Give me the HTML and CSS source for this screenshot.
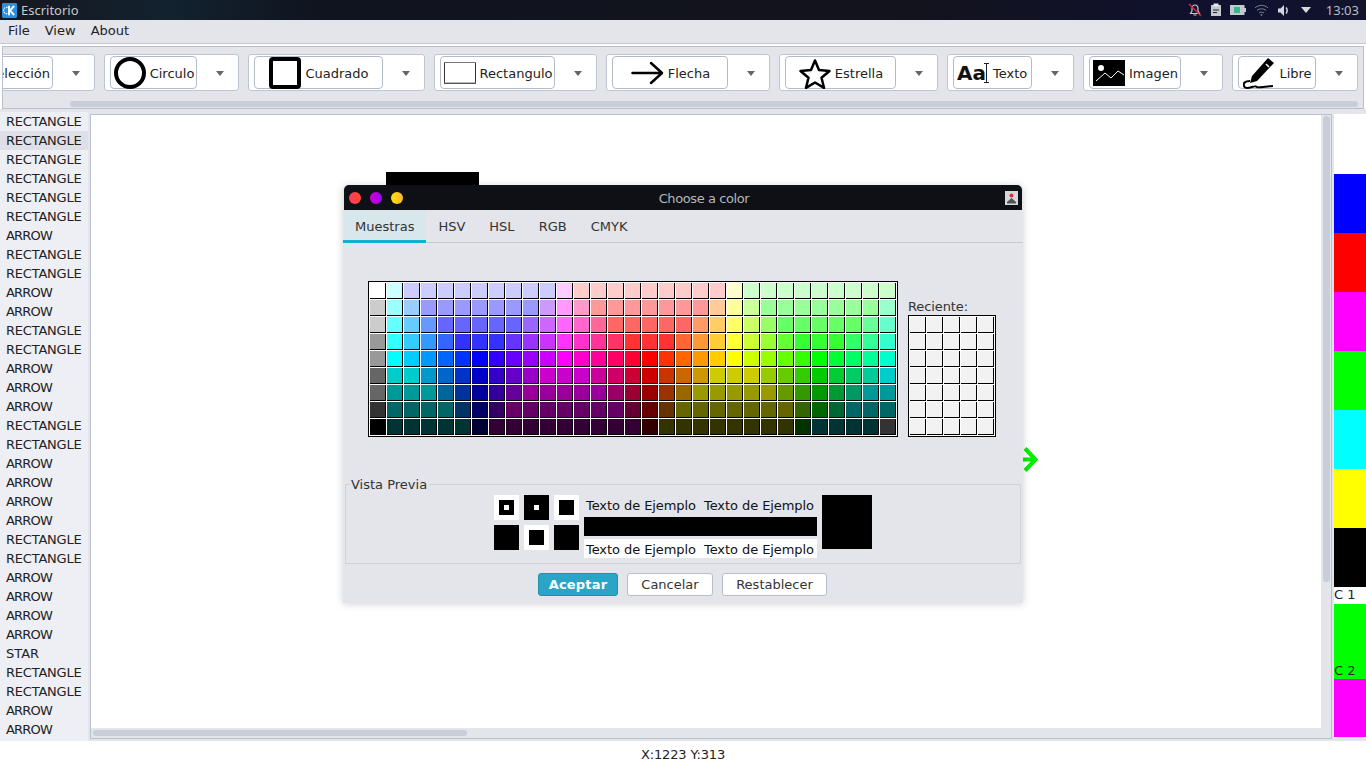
FILE: index.html
```html
<!DOCTYPE html>
<html lang="es">

<head>
    <meta charset="utf-8" />
    <title>Escritorio</title>
    <link rel="stylesheet" href="styles.css">
</head>

<body>
    <!-- desktop panel -->
    <header class="panel">
        <svg class="panel-logo" width="15" height="15" viewBox="0 0 16 16">
            <rect width="16" height="16" rx="1.5" fill="#2b8fe0" />
            <g stroke="#fff" stroke-width="2" fill="none">
                <path d="M7.5 3v10M13 3L8.5 8l4.5 5" />
            </g>
            <circle cx="5" cy="8" r="3.4" fill="none" stroke="#fff" stroke-width="1.2" stroke-dasharray="1.5 1" />
        </svg>
        <span class="panel-title">Escritorio</span>
        <div class="tray">
            <svg width="14" height="14" viewBox="0 0 14 14">
                <path d="M7 2c-2 0-3 1.500-3 4v2l-1.500 2.500h9L10 8V6c0-2.500-1-4-3-4zM5.500 12h3" fill="none" stroke="#c4c8cf" stroke-width="1.200" />
                <path d="M1 1l12 12" stroke="#e0203c" stroke-width="1.400" />
            </svg>
            <svg width="12" height="14" viewBox="0 0 12 14">
                <rect x="1" y="2" width="10" height="11" fill="#c4c8cf" />
                <rect x="3.500" y="0.500" width="5" height="3" fill="#e4e6ea" />
                <path d="M3 7h6M3 9.500h4" stroke="#23252e" />
            </svg>
            <svg width="16" height="12" viewBox="0 0 16 12">
                <rect x="0.500" y="1.500" width="13.500" height="9" fill="#c4c8cf" stroke="#c4c8cf" />
                <rect x="4" y="3" width="6" height="6" fill="#35b98c" />
                <rect x="14" y="4" width="2" height="4" fill="#c4c8cf" />
            </svg>
            <svg width="15" height="12" viewBox="0 0 15 12" fill="none" stroke="#7f8490" stroke-width="1">
                <path d="M1 4c3.500-3.500 9.500-3.500 13 0M3 6.500c2.500-2.300 6.500-2.300 9 0M5 9c1.300-1.100 3.700-1.100 5 0" />
                <circle cx="7.500" cy="11" r="0.600" fill="#7f8490" />
            </svg>
            <svg width="13" height="13" viewBox="0 0 13 13">
                <path d="M1 4.500h2.500L7 1v11L3.500 8.500H1z" fill="#d3d6db" />
                <path d="M9 3.500c1.500 1.500 1.500 4.500 0 6" fill="none" stroke="#d3d6db" stroke-width="1.500" />
            </svg>
            <svg class="tray-arrow" width="10" height="6" viewBox="0 0 10 6">
                <path d="M0 0h10L5 6z" fill="#d8dade" />
            </svg>
            <span class="clock">13:03</span>
        </div>
    </header>

    <nav class="menubar">
        <span>File</span>
        <span>View</span>
        <span>About</span>
    </nav>

    <section class="toolbar">
        <div class="tool-row">
            <div class="tool tool-seleccion">
                <button class="tool-btn">Selección</button>
                <span class="tool-arrow"></span>
            </div>
            <div class="tool">
                <button class="tool-btn btn-circulo">
                    <svg width="32" height="32" viewBox="0 0 32 32">
                        <circle cx="16" cy="16" r="14" fill="none" stroke="#000" stroke-width="4" />
                    </svg>
                    Circulo
                </button>
                <span class="tool-arrow"></span>
            </div>
            <div class="tool">
                <button class="tool-btn btn-cuadrado">
                    <svg width="32" height="32" viewBox="0 0 32 32">
                        <rect x="2" y="2" width="28" height="28" rx="2" fill="#fff" stroke="#000" stroke-width="4" />
                    </svg>
                    Cuadrado
                </button>
                <span class="tool-arrow"></span>
            </div>
            <div class="tool">
                <button class="tool-btn btn-rectangulo">
                    <svg width="32" height="22" viewBox="0 0 32 22">
                        <rect x="0.500" y="0.500" width="31" height="21" fill="#fff" stroke="#333" />
                        <path d="M0 21h32M0 0.500h32" stroke="#777" />
                    </svg>
                    Rectangulo
                </button>
                <span class="tool-arrow"></span>
            </div>
            <div class="tool">
                <button class="tool-btn btn-flecha">
                    <svg width="33" height="24" viewBox="0 0 33 24" fill="none" stroke="#000" stroke-width="2.500" stroke-linecap="round" stroke-linejoin="round">
                        <path d="M1.500 12h29M20 2l11 10-11 10" />
                    </svg>
                    Flecha
                </button>
                <span class="tool-arrow"></span>
            </div>
            <div class="tool">
                <button class="tool-btn btn-estrella">
                    <svg width="32" height="31" viewBox="0 0 32 31">
                        <path d="M16 2.500l4 9.500 10.500 1-8 6.800 2.500 10L16 24.500 7 29.800l2.500-10-8-6.800 10.500-1z" fill="none" stroke="#000" stroke-width="2.500" stroke-linejoin="round" />
                    </svg>
                    Estrella
                </button>
                <span class="tool-arrow"></span>
            </div>
            <div class="tool">
                <button class="tool-btn btn-texto">
                    <span class="icon-aa">Aa</span>
                    <svg class="icon-cursor" width="5" height="20" viewBox="0 0 5 20">
                        <path d="M0 0.500h5M2.500 0.500v19M0 19.500h5" fill="none" stroke="#222" />
                    </svg>
                    Texto
                </button>
                <span class="tool-arrow"></span>
            </div>
            <div class="tool">
                <button class="tool-btn btn-imagen">
                    <svg width="32" height="26" viewBox="0 0 32 26">
                        <rect width="32" height="26" fill="#000" />
                        <circle cx="8" cy="8" r="3" fill="#fff" />
                        <path d="M3 21l9-8 6 5 7-7 6 4" fill="none" stroke="#fff" />
                    </svg>
                    Imagen
                </button>
                <span class="tool-arrow"></span>
            </div>
            <div class="tool">
                <button class="tool-btn btn-libre">
                    <svg width="32" height="33" viewBox="0 0 32 33">
                        <path d="M25 1l6 5-17 18-7 2 2-7z" fill="#000" />
                        <path d="M23 7l3 3" stroke="#fff" stroke-width="1.500" />
                        <path d="M7 24c-5 0-7 2-6 5 1 3 5 2 8 1s4-1 5 0 4 0 16-1" fill="none" stroke="#000" stroke-width="2" />
                    </svg>
                    Libre
                </button>
                <span class="tool-arrow"></span>
            </div>
        </div>
        <div class="tool-scroll"></div>
    </section>

    <main class="workspace">
        <ul class="shape-list">
            <li>RECTANGLE</li>
            <li class="selected">RECTANGLE</li>
            <li>RECTANGLE</li>
            <li>RECTANGLE</li>
            <li>RECTANGLE</li>
            <li>RECTANGLE</li>
            <li class="arrow">ARROW</li>
            <li>RECTANGLE</li>
            <li>RECTANGLE</li>
            <li class="arrow">ARROW</li>
            <li class="arrow">ARROW</li>
            <li>RECTANGLE</li>
            <li>RECTANGLE</li>
            <li class="arrow">ARROW</li>
            <li class="arrow">ARROW</li>
            <li class="arrow">ARROW</li>
            <li>RECTANGLE</li>
            <li>RECTANGLE</li>
            <li class="arrow">ARROW</li>
            <li class="arrow">ARROW</li>
            <li class="arrow">ARROW</li>
            <li class="arrow">ARROW</li>
            <li>RECTANGLE</li>
            <li>RECTANGLE</li>
            <li class="arrow">ARROW</li>
            <li class="arrow">ARROW</li>
            <li class="arrow">ARROW</li>
            <li class="arrow">ARROW</li>
            <li class="star">STAR</li>
            <li>RECTANGLE</li>
            <li>RECTANGLE</li>
            <li class="arrow">ARROW</li>
            <li class="arrow">ARROW</li>
        </ul>

        <div class="canvas-pane">
            <div class="canvas">
                <div class="shape-rect"></div>
                <svg class="shape-arrow" width="20" height="25" viewBox="0 0 20 25" fill="none" stroke="#00ee00" stroke-width="4">
                    <path d="M0 12.500H15M5 1.500L15.500 12.500 5 23.500" />
                </svg>
            </div>
            <div class="vscroll"><div class="vthumb"></div></div>
            <div class="hscroll"><div class="hthumb"></div></div>
            <div class="corner"></div>
        </div>

        <aside class="colors">
            <div class="color c-white"></div>
            <div class="color c-blue"></div>
            <div class="color c-red"></div>
            <div class="color c-magenta"></div>
            <div class="color c-green"></div>
            <div class="color c-cyan"></div>
            <div class="color c-yellow"></div>
            <div class="color c-black"></div>
            <div class="slot-label">C 1</div>
            <div class="slot-green">C 2</div>
            <div class="slot-magenta"></div>
        </aside>
    </main>

    <footer class="status">X:1223 Y:313</footer>

    <!-- color chooser -->
    <div class="dialog">
        <div class="dialog-title">
            <span class="dot dot-red"></span>
            <span class="dot dot-purple"></span>
            <span class="dot dot-yellow"></span>
            <span class="dialog-name">Choose a color</span>
            <svg class="dialog-icon" width="13" height="14" viewBox="0 0 13 14">
                <rect width="13" height="14" fill="#d5d7dc" />
                <path d="M2 11l4.500-4 4.500 4v1.500H2z" fill="#555" />
                <circle cx="6.500" cy="4.500" r="2" fill="#d83030" />
            </svg>
        </div>
        <div class="tabs">
            <span class="tab active">Muestras</span>
            <span class="tab">HSV</span>
            <span class="tab">HSL</span>
            <span class="tab">RGB</span>
            <span class="tab">CMYK</span>
        </div>
        <div class="swatch-area">
            <div class="swatches main-swatches" id="mainSwatches"></div>
            <div class="recent">
                <div class="recent-label">Reciente:</div>
                <div class="swatches recent-swatches" id="recentSwatches"></div>
            </div>
        </div>
        <fieldset class="preview">
            <legend>Vista Previa</legend>
            <div class="preview-row">
                <div class="tiles">
                    <div class="tile white"><div class="inner black"><div class="core white"></div></div></div>
                    <div class="tile black"><div class="core white"></div></div>
                    <div class="tile white"><div class="inner black"></div></div>
                    <div class="tile black"></div>
                    <div class="tile white"><div class="inner black"></div></div>
                    <div class="tile black"></div>
                </div>
                <div class="samples">
                    <div class="sample"><span>Texto de Ejemplo</span><span>Texto de Ejemplo</span></div>
                    <div class="sample-bar"></div>
                    <div class="sample sample-white"><span>Texto de Ejemplo</span><span>Texto de Ejemplo</span></div>
                </div>
                <div class="preview-color"></div>
            </div>
        </fieldset>
        <div class="dialog-buttons">
            <button class="btn btn-ok">Aceptar</button>
            <button class="btn btn-cancel">Cancelar</button>
            <button class="btn btn-reset">Restablecer</button>
        </div>
    </div>

    <script src="swatches.js"></script>
</body>

</html>
```

FILE: styles.css
```css
:root {
    --bg: #e3e5eb;
    --line: #b9c0cc;
    --thumb: #c8cdd7;
    --text: #222;
}

* {
    box-sizing: border-box;
}

html,
body {
    margin: 0;
    height: 768px;
    overflow: hidden;
}

body {
    position: relative;
    display: flex;
    flex-direction: column;
    background: #fff;
    color: var(--text);
    font-family: "DejaVu Sans", sans-serif;
    font-size: 13px;
}

/* desktop panel */
.panel {
    display: flex;
    align-items: center;
    height: 20px;
    padding: 0 7px 0 2px;
    background: linear-gradient(90deg, #16171f 0, #12222f 170px, #10141f 320px, #13131d 900px, #0f1130 1250px, #12142c 100%);
    font-family: "Noto Sans", sans-serif;
    color: #c6cad0;
}

.panel-logo {
    margin-right: 4px;
}

.tray {
    display: flex;
    align-items: center;
    gap: 8px;
    margin-left: auto;
}

.tray-arrow {
    margin: 0 7px 0 3px;
}

.clock {
    color: #b9bdc5;
}

/* menu */
.menubar {
    display: flex;
    gap: 15px;
    height: 24px;
    padding: 3px 8px 0;
    background: var(--bg);
    border-bottom: 1px solid #c3c8d2;
}

/* toolbar */
.toolbar {
    margin: 2px 2px 0;
    height: 63px;
    border: 1px solid var(--line);
    background: var(--bg);
}

.tool-row {
    display: flex;
    gap: 9px;
    padding-top: 7px;
    overflow: hidden;
}

.tool {
    display: flex;
    flex: none;
    align-items: center;
    height: 37px;
    padding-left: 5px;
    background: #fff;
    border: 1px solid #bfc5d0;
    border-radius: 3px;
}

.tool-seleccion {
    margin-left: -46px;
}

.tool-btn {
    display: flex;
    align-items: center;
    justify-content: center;
    gap: 4px;
    height: 33px;
    padding: 1px 0 0 1px;
    background: #fff;
    border: 1px solid #b4bbc8;
    border-radius: 4px;
    color: var(--text);
    font: inherit;
    white-space: nowrap;
}

.tool-seleccion .tool-btn {
    justify-content: flex-end;
    width: 90px;
    padding-right: 2px;
    overflow: hidden;
}

.btn-circulo { width: 87px; }
.btn-cuadrado { width: 129px; }
.btn-rectangulo { width: 115px; }
.btn-flecha { width: 116px; }
.btn-estrella { width: 111px; }
.btn-imagen { width: 92px; }
.btn-libre { width: 78px; }

.btn-texto {
    justify-content: flex-start;
    width: 79px;
    padding-left: 3px;
}

.tool-arrow {
    flex: none;
    width: 41px;
    height: 5px;
    position: relative;
}

/* little triangle of the combo */
.tool-arrow::after {
    content: "";
    position: absolute;
    left: 19px;
    top: 1px;
    border-left: 4.500px solid transparent;
    border-right: 4.500px solid transparent;
    border-top: 5px solid #666;
}

.icon-aa {
    font-weight: 700;
    font-size: 20px;
    color: #111;
    line-height: 1;
}

.icon-cursor {
    margin-left: -6px;
}

.tool-scroll {
    height: 6px;
    margin: 10px 5px 0 67px;
    background: var(--thumb);
    border-radius: 3px;
}

/* main area */
.workspace {
    display: flex;
    gap: 2px;
    height: 632px;
    padding-top: 3px;
    background: var(--bg);
}

.shape-list {
    flex: none;
    width: 88px;
    margin: 0;
    padding: 0;
    list-style: none;
    background: #eeeff4;
    overflow: hidden;
}

.shape-list li {
    height: 19px;
    padding-left: 6px;
    line-height: 19px;
    letter-spacing: -0.220px;
}

.shape-list .arrow {
    letter-spacing: -0.800px;
}

.shape-list .star {
    letter-spacing: 0;
}

.shape-list .selected {
    background: #dfe0e7;
}

.canvas-pane {
    display: grid;
    flex: none;
    grid-template-columns: 1230px 10px;
    grid-template-rows: 613px 10px;
    width: 1242px;
    height: 625px;
    margin-top: 2px;
    border: 1px solid var(--line);
}

.canvas {
    position: relative;
    background: #fff;
}

.shape-rect {
    position: absolute;
    left: 295px;
    top: 57px;
    width: 93px;
    height: 30px;
    background: #000;
}

.shape-arrow {
    position: absolute;
    left: 929px;
    top: 332px;
}

.vscroll,
.hscroll,
.corner {
    background: var(--bg);
}

.vthumb {
    width: 7px;
    height: 466px;
    margin: 1px 0 0 2px;
    background: var(--thumb);
    border-radius: 4px;
}

.hthumb {
    width: 374px;
    height: 6px;
    margin: 2px 0 0 2px;
    background: var(--thumb);
    border-radius: 3px;
}

.colors {
    flex: none;
    display: flex;
    flex-direction: column;
    width: 32px;
    height: 625px;
    margin-top: 2px;
}

.color {
    flex: none;
    height: 59px;
}

.c-white { height: 60px; background: #fff; }
.c-blue { background: #00f; }
.c-red { background: #f00; }
.c-magenta { background: #f0f; }
.c-green { background: #0f0; }
.c-cyan { background: #0ff; }
.c-yellow { background: #ff0; }
.c-black { background: #000; }

.slot-label {
    height: 17px;
    background: #fff;
    font-size: 13px;
    line-height: 16px;
}

.slot-green {
    display: flex;
    align-items: flex-end;
    height: 75px;
    background: #0f0;
    line-height: 16px;
}

.slot-magenta {
    height: 58px;
    background: #f0f;
}

.status {
    height: 27px;
    padding: 6px 0 0 641px;
    background: #fff;
    letter-spacing: -0.150px;
}

/* color chooser dialog */
.dialog {
    position: absolute;
    left: 343px;
    top: 185px;
    width: 680px;
    height: 418px;
    background: var(--bg);
    box-shadow: 0 1px 8px rgba(0, 0, 0, 0.18);
    border-radius: 5px 5px 0 0;
}

.dialog-title {
    display: flex;
    align-items: center;
    gap: 9px;
    position: relative;
    height: 25px;
    margin: 0 1px;
    padding-left: 5px;
    background: #0e1015;
    border-radius: 5px 5px 0 0;
}

.dot {
    width: 12px;
    height: 12px;
    border-radius: 50%;
}

.dot-red { background: linear-gradient(90deg, #ff3a5e, #ff4a30); }
.dot-purple { background: linear-gradient(90deg, #d000d8, #9c00f0); }
.dot-yellow { background: linear-gradient(90deg, #ffe000, #ffb82e); }

.dialog-name {
    position: absolute;
    left: 42px;
    right: 0;
    top: 6px;
    text-align: center;
    color: #b4b7bc;
    letter-spacing: -0.400px;
}

.dialog-icon {
    position: absolute;
    right: 4px;
    top: 6px;
}

.tabs {
    display: flex;
    height: 33px;
    border-bottom: 1px solid #c3cad1;
}

.tab {
    height: 33px;
    padding: 9px 12px 0;
    color: #333;
}

.tab.active {
    background: #d8e7eb;
    border-bottom: 3px solid #0fb0d2;
}

.swatch-area {
    display: flex;
    align-items: flex-end;
    gap: 10px;
    padding: 38px 0 0 25px;
}

.swatches {
    display: grid;
    gap: 1px;
    padding: 1px;
    background: #fff;
    border: 1px solid #000;
}

.main-swatches {
    grid-template-columns: repeat(31, 16px);
    grid-auto-rows: 16px;
}

.recent-swatches {
    grid-template-columns: repeat(5, 16px);
    grid-auto-rows: 16px;
}

.cell {
    border-right: 1px solid #000;
    border-bottom: 1px solid #000;
}

.recent-label {
    line-height: 16px;
    color: #333;
    letter-spacing: -0.100px;
}

.preview {
    height: 88px;
    margin: 39px 2px 0;
    padding: 0;
    border: 1px solid #cfd2d8;
    min-width: 0;
}

.preview legend {
    margin-left: 3px;
    padding: 1px 2px 0;
    line-height: 16px;
    color: #333;
}

.preview-row {
    display: flex;
    justify-content: center;
    gap: 5px;
    padding-top: 2px;
}

.tiles {
    display: grid;
    grid-template-columns: repeat(3, 25px);
    grid-auto-rows: 25px;
    gap: 5px;
}

.tile {
    display: flex;
    align-items: center;
    justify-content: center;
}

.inner {
    display: flex;
    align-items: center;
    justify-content: center;
    width: 15px;
    height: 15px;
}

.core {
    width: 5px;
    height: 5px;
}

.white { background: #fff; }
.black { background: #000; }

.samples {
    width: 233px;
}

.sample {
    display: flex;
    gap: 8px;
    height: 22px;
    padding: 2px 0 0 2px;
    line-height: 17px;
    color: #111;
    letter-spacing: -0.070px;
}

.sample span {
    width: 110px;
    white-space: nowrap;
}

.sample-white {
    height: 19px;
    margin-top: 3px;
    padding-top: 2px;
    background: #fff;
}

.sample-bar {
    height: 19px;
    background: #000;
}

.preview-color {
    width: 50px;
    height: 54px;
    background: #000;
}

.dialog-buttons {
    display: flex;
    justify-content: center;
    gap: 9px;
    margin-top: 9px;
    padding-right: 1px;
}

.btn {
    height: 23px;
    padding: 0;
    background: #fff;
    border: 1px solid #b7bdca;
    border-radius: 3px;
    color: #333;
    font: inherit;
}

.btn-ok {
    width: 80px;
    background: #2aa5c5;
    border-color: #2590ad;
    color: #fff;
    font-weight: 700;
    letter-spacing: 0.200px;
}

.btn-cancel { width: 86px; }
.btn-reset { width: 105px; }
```

FILE: swatches.js
```js
// same table as the swing swatch panel, one string per row, "abc*5" repeats a colour
const ROWS = [
    "fff cff ccf*9 fcf fcc*9 ffc cfc*9",
    "ccc 9ff 9cf 99f*7 c9f f9f f9c f99*7 fc9 ff9 cf9 9f9*7 9fc",
    "ccc 6ff 6cf 69f 66f*5 96f c6f f6f f6c f69 f66*5 f96 fc6 ff6 cf6 9f6 6f6*5 6f9 6fc",
    "999 3ff 3cf 39f 36f 33f*3 63f 93f c3f f3f f3c f39 f36 f33*3 f63 f93 fc3 ff3 cf3 9f3 6f3 3f3*3 3f6 3f9 3fc",
    "999 0ff 0cf 09f 06f 03f 00f 30f 60f 90f c0f f0f f0c f09 f06 f03 f00 f30 f60 f90 fc0 ff0 cf0 9f0 6f0 3f0 0f0 0f3 0f6 0f9 0fc",
    "666 0cc*2 09c 06c 03c 00c 30c 60c 90c c0c*3 c09 c06 c03 c00 c30 c60 c90 cc0*3 9c0 6c0 3c0 0c0 0c3 0c6 0c9 0cc",
    "666 099*3 069 039 009 309 609 909*5 906 903 900 930 960 990*5 690 390 090 093 096 099*2",
    "333 066*4 036 006 306 606*7 603 600 630 660*7 360 060 063 066*3",
    "000 033*5 003 303*9 300 330*8 030 033*4 333",
];

function addCell(parent, color) {
    const cell = document.createElement("div");
    cell.className = "cell";
    cell.style.background = "#" + color;
    parent.appendChild(cell);
}

const main = document.getElementById("mainSwatches");
ROWS.forEach((row) => {
    row.split(" ").forEach((item) => {
        const [color, count] = item.split("*");
        for (let i = 0; i < Number(count || 1); i++) addCell(main, color);
    });
});

const recent = document.getElementById("recentSwatches");
for (let i = 0; i < 35; i++) addCell(recent, "f2f2f2");
```
